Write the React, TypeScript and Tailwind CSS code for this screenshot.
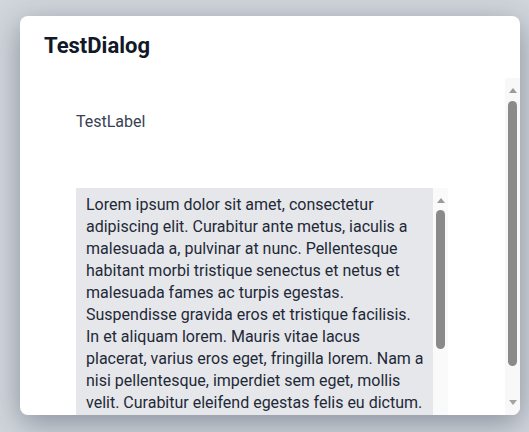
import React from "react";

const LOREM =
  "Lorem ipsum dolor sit amet, consectetur adipiscing elit. Curabitur ante metus, iaculis a malesuada a, pulvinar at nunc. Pellentesque habitant morbi tristique senectus et netus et malesuada fames ac turpis egestas. Suspendisse gravida eros et tristique facilisis. In et aliquam lorem. Mauris vitae lacus placerat, varius eros eget, fringilla lorem. Nam a nisi pellentesque, imperdiet sem eget, mollis velit. Curabitur eleifend egestas felis eu dictum. Vestibulum ante ipsum primis in faucibus orci luctus et ultrices posuere cubilia curae; Donec et sapien a odio dapibus fermentum. Sed ac neque quis justo cursus aliquet.";

function UpArrow() {
  return <div className="w-0 h-0 border-l-[4.5px] border-r-[4.5px] border-b-[5px] border-l-transparent border-r-transparent border-b-[#9a9a9a]" />;
}
function DownArrow() {
  return <div className="w-0 h-0 border-l-[4.5px] border-r-[4.5px] border-t-[5px] border-l-transparent border-r-transparent border-t-[#a3a3a3]" />;
}

export default function App() {
  return (
    <div
      className="w-[529px] h-[432px] overflow-hidden bg-[#d1d6dc] pt-4 pl-5"
      style={{ fontFamily: "Roboto, 'Noto Sans', sans-serif" }}
    >
      <div className="w-[500px] h-[399px] bg-white rounded-lg shadow-[0_8px_30px_rgba(30,41,59,0.4)] flex flex-col overflow-hidden">
        <div className="px-6 pt-[16px] h-[62px] shrink-0">
          <h1 className="text-[22px] leading-[28px] font-bold text-[#111827]">TestDialog</h1>
        </div>
        <div className="flex-1 flex flex-row min-h-0">
          <div className="flex-1 overflow-hidden pl-14 pt-8">
            <div className="text-[16px] leading-6 text-[#374151]">TestLabel</div>
            <div className="mt-[54px] flex flex-row w-[372px] h-[247px]">
              <div className="w-[357px] h-full overflow-hidden bg-[#e5e7eb] pl-[10px] pr-[8.5px] py-[6px] text-[16px] leading-[22px] text-[#1f2937]">
                {LOREM}
              </div>
              <div className="w-[15px] h-full bg-[#fafafa] flex flex-col items-center pt-[10px]">
                <UpArrow />
                <div className="mt-[7px] w-[9px] h-[139px] rounded-full bg-[#8a8a8a]" />
              </div>
            </div>
          </div>
          <div className="w-[15px] shrink-0 bg-[#f8f8f8] flex flex-col items-center pt-[10px] pb-[10px]">
            <UpArrow />
            <div className="mt-[8px] w-[9px] h-[265px] rounded-full bg-[#8a8a8a]" />
            <div className="flex-1" />
            <DownArrow />
          </div>
        </div>
      </div>
    </div>
  );
}
